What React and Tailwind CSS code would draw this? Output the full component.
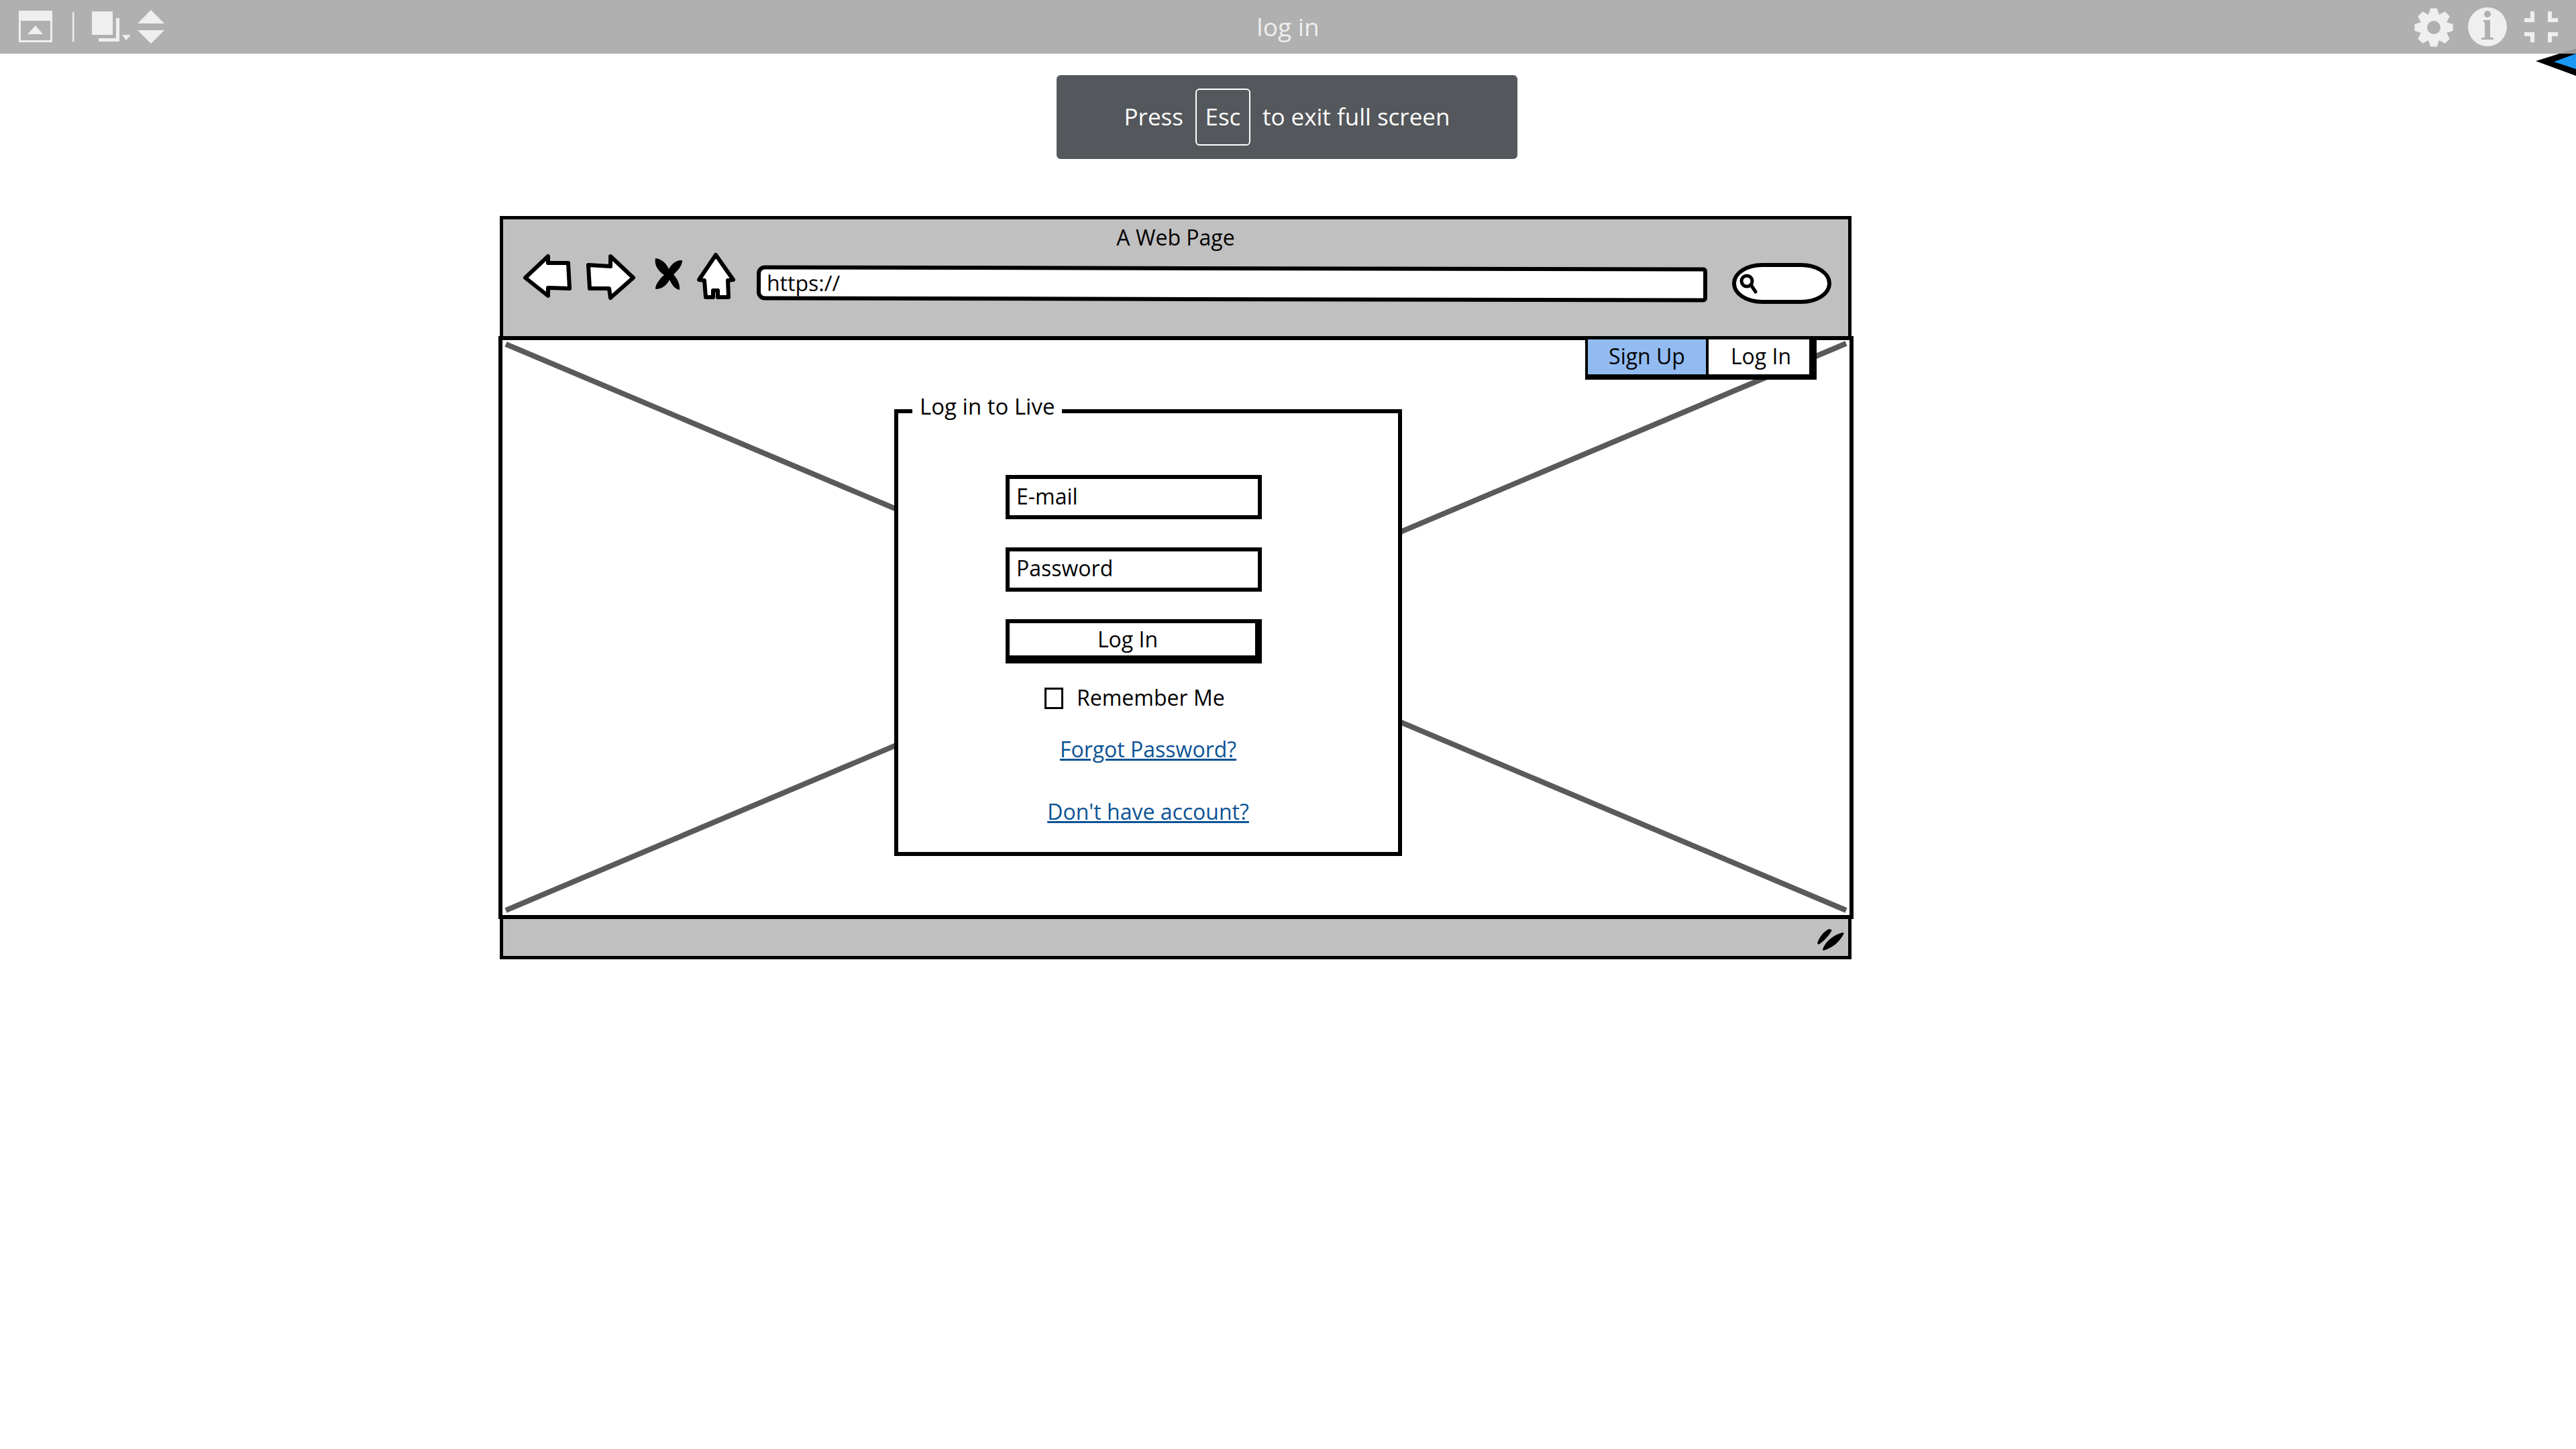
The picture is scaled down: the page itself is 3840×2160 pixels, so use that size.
const gearTeeth = () => {
    const cx = 3628;
    const cy = 41;
    let d = "";
    for (let i = 0; i < 8; i++) {
        const a = (i * Math.PI) / 4 - Math.PI / 2;
        const pt = (r, off) => `${(cx + r * Math.cos(a + off)).toFixed(1)} ${(cy + r * Math.sin(a + off)).toFixed(1)}`;
        d += `${i === 0 ? "M" : "L"}${pt(21, -0.38)} L${pt(29, -0.17)} L${pt(29, 0.17)} L${pt(21, 0.38)} `;
    }
    return d + "Z";
};

const TopBar = () => (
    <div className="flex h-20 items-center bg-[#b0b0b0]">
        <div className="flex flex-1 items-center">
            <svg viewBox="0 0 260 80" className="h-20 w-[260px] fill-[#efefef]">
                <path d="M28 16h50v47H28z M31 31v29h44V31z" fillRule="evenodd" />
                <path d="M41 51l12-13 11 13z" />
                <path d="M108 18h2.500v44H108z" />
                <path d="M137 17h31v35h-31z" />
                <path d="M173 27h5v35h-31v-5h26z" />
                <path d="M182 52h13l-7 8z" />
                <path d="M205 35l20-20 20 20z" />
                <path d="M205 45h40l-20 20z" />
            </svg>
        </div>
        <div className="font-['Open_Sans',sans-serif] text-[37px] text-[#eeeeee]">log in</div>
        <div className="flex flex-1 justify-end">
            <svg viewBox="3590 0 250 80" className="h-20 w-[250px] fill-[#efefef]">
                <path d={gearTeeth()} />
                <circle cx="3628" cy="41" r="10" fill="#b0b0b0" />
                <circle cx="3708" cy="40" r="29" />
                <circle cx="3708" cy="21" r="5" fill="#b0b0b0" />
                <path d="M3702 30h10v26h5v3h-18v-3h5v-23h-2z" fill="#b0b0b0" />
                <path d="M3772 17h6v16h-15v-6h9z M3798 17h6v10h9v6h-15z M3763 48h15v15h-6v-9h-9z M3798 48h15v6h-9v9h-6z" />
            </svg>
        </div>
    </div>
);

const CornerArrow = () => (
    <svg viewBox="3770 60 70 60" className="absolute right-0 top-[60px] h-[60px] w-[70px]">
        <path d="M3815 80l25-8v8z" fill="#999999" />
        <path d="M3780 91l35-11h25v33z" fill="#000000" />
        <path d="M3807 92l33-12v23z" fill="#1b98f5" />
    </svg>
);

const ExitToast = () => (
    <div className="ml-[1575px] mt-8 flex h-[125px] w-[687px] items-center justify-center gap-[18px] rounded-[6px] bg-[#54575b] font-['Open_Sans',sans-serif] text-[35px] text-white">
        <span>Press</span>
        <span className="flex h-[85px] w-[82px] items-center justify-center rounded-[6px] border-2 border-white">Esc</span>
        <span>to exit full screen</span>
    </div>
);

const Toolbar = () => (
    <div className="mt-[3px] flex h-[78px] items-start pl-[28px]">
        <svg viewBox="778 376 75 72" className="h-[72px] w-[75px] fill-white stroke-black stroke-[6px]" strokeLinejoin="round">
            <path d="M783 414l34-32v10h30l2 38-32-1v12z" />
        </svg>
        <svg viewBox="873 376 75 72" className="ml-[20px] h-[72px] w-[75px] fill-white stroke-black stroke-[6px]" strokeLinejoin="round">
            <path d="M877 395l33 2v-15l34 32-34 30-2-14-29 0z" />
        </svg>
        <svg viewBox="975 376 45 72" className="ml-[27px] h-[72px] w-[45px] fill-black">
            <path d="M997 401C993 392 986 386 977 385C975 395 981 404 990 410C983 416 977 424 977 431C987 431 994 425 998 417C1002 425 1006 431 1013 432C1014 424 1010 416 1004 409C1011 403 1017 396 1017 388C1009 387 1001 393 997 401Z" />
        </svg>
        <svg viewBox="1038 376 60 72" className="ml-[18px] h-[72px] w-[60px] fill-white stroke-black stroke-[6px]" strokeLinejoin="round">
            <path d="M1067 380l26 37-8 1 1 25-16 0 0-10-7 0 0 10-11 0-2-25-8-1z" />
        </svg>
        <div className="ml-[30px] mt-[21px] flex h-[52px] w-[1417px] rotate-[0.12deg] items-center rounded-l-[12px] rounded-r-[6px] border-[6px] border-black bg-white pl-[9px] text-[32px] text-black">
            https://
        </div>
        <div className="ml-[37px] mt-[16px] flex h-[61px] w-[148px] items-center rounded-[45px/30px] border-[6px] border-black bg-white pl-[3px]">
            <svg viewBox="0 0 30 34" className="mt-[3px] h-[34px] w-[30px] fill-none stroke-black stroke-[5px]" strokeLinecap="round">
                <circle cx="13" cy="12" r="8" />
                <path d="M20 19l6 9" />
            </svg>
        </div>
    </div>
);

const GripIcon = () => (
    <svg viewBox="2705 1380 46 40" className="h-[40px] w-[46px] fill-black">
        <path d="M2709 1408c3-9 9-17 17-21 4 0 5 1 4 3-4 7-11 15-19 20z" />
        <path d="M2717 1417c4-11 15-21 30-25 1 0 2 1 1 3-6 11-16 20-30 24z" />
    </svg>
);

const App = () => {
    return (
        <div className="relative min-h-screen bg-white">
            <TopBar />
            <CornerArrow />
            <ExitToast />
            <div className="ml-[743px] mt-[85px] w-[2020px] font-['Open_Sans',sans-serif] text-black">
                <div className="ml-[2px] h-[179px] w-[2015px] border-x-[5px] border-t-[5px] border-black bg-[#c0c0c0] pt-[8px]">
                    <div className="text-center text-[32px] leading-[38px]">A Web Page</div>
                    <Toolbar />
                </div>

                <div className="relative h-[869px] border-[6px] border-black bg-white pl-[584px] pt-[79px]">
                    <svg viewBox="749 507 2008 857" className="absolute inset-0 h-full w-full stroke-[#5a5a5a] stroke-[8px]">
                        <path d="M754 513L2752 1357" />
                        <path d="M2752 512L754 1357" />
                    </svg>

                    <div className="absolute -top-[6px] right-[49px] flex h-[65px] text-[32px] leading-[38px]">
                        <div className="flex w-[180px] items-center justify-center border-b-[8px] border-l-[4px] border-t-[5px] border-black bg-[#92bbf1] pb-[2px]">Sign Up</div>
                        <div className="flex w-[165px] items-center justify-center border-b-[8px] border-l-[4px] border-r-[11px] border-t-[5px] border-black bg-white pb-[2px] pl-[6px]">Log In</div>
                    </div>

                    <fieldset className="relative h-[690px] w-[757px] border-[6px] border-black bg-white text-[32px]">
                        <legend className="ml-[21px] bg-white px-[11px] pb-[14px] text-[33px] leading-[40px]">Log in to Live</legend>
                        <div className="ml-[160px] mt-[68px] flex w-[382px] flex-col">
                            <input placeholder="E-mail" className="h-[66px] w-full border-[6px] border-black pb-[3px] pl-[10px] placeholder:text-black" />
                            <input placeholder="Password" className="mt-[42px] h-[66px] w-full border-[6px] border-black pb-[5px] pl-[10px] placeholder:text-black" />
                            <button className="mt-[41px] h-[66px] w-full border-b-[12px] border-l-[6px] border-r-[10px] border-t-[6px] border-black pr-[14px]">Log In</button>
                            <label className="ml-[58px] mt-[36px] flex h-[32px] items-center gap-[20px]">
                                <span className="h-[32px] w-[28px] border-[3px] border-black" />
                                <span className="-mt-[3px]">Remember Me</span>
                            </label>
                        </div>
                        <div className="mt-[41px] text-center leading-[38px] text-[#0b5394] underline">Forgot Password?</div>
                        <div className="mt-[55px] text-center leading-[38px] text-[#0b5394] underline">Don't have account?</div>
                    </fieldset>
                </div>

                <div className="ml-[2px] flex h-[60px] w-[2015px] items-center justify-end border-x-[5px] border-b-[5px] border-black bg-[#c0c0c0] pr-[4px]">
                    <GripIcon />
                </div>
            </div>
        </div>
    );
};

export default App;
